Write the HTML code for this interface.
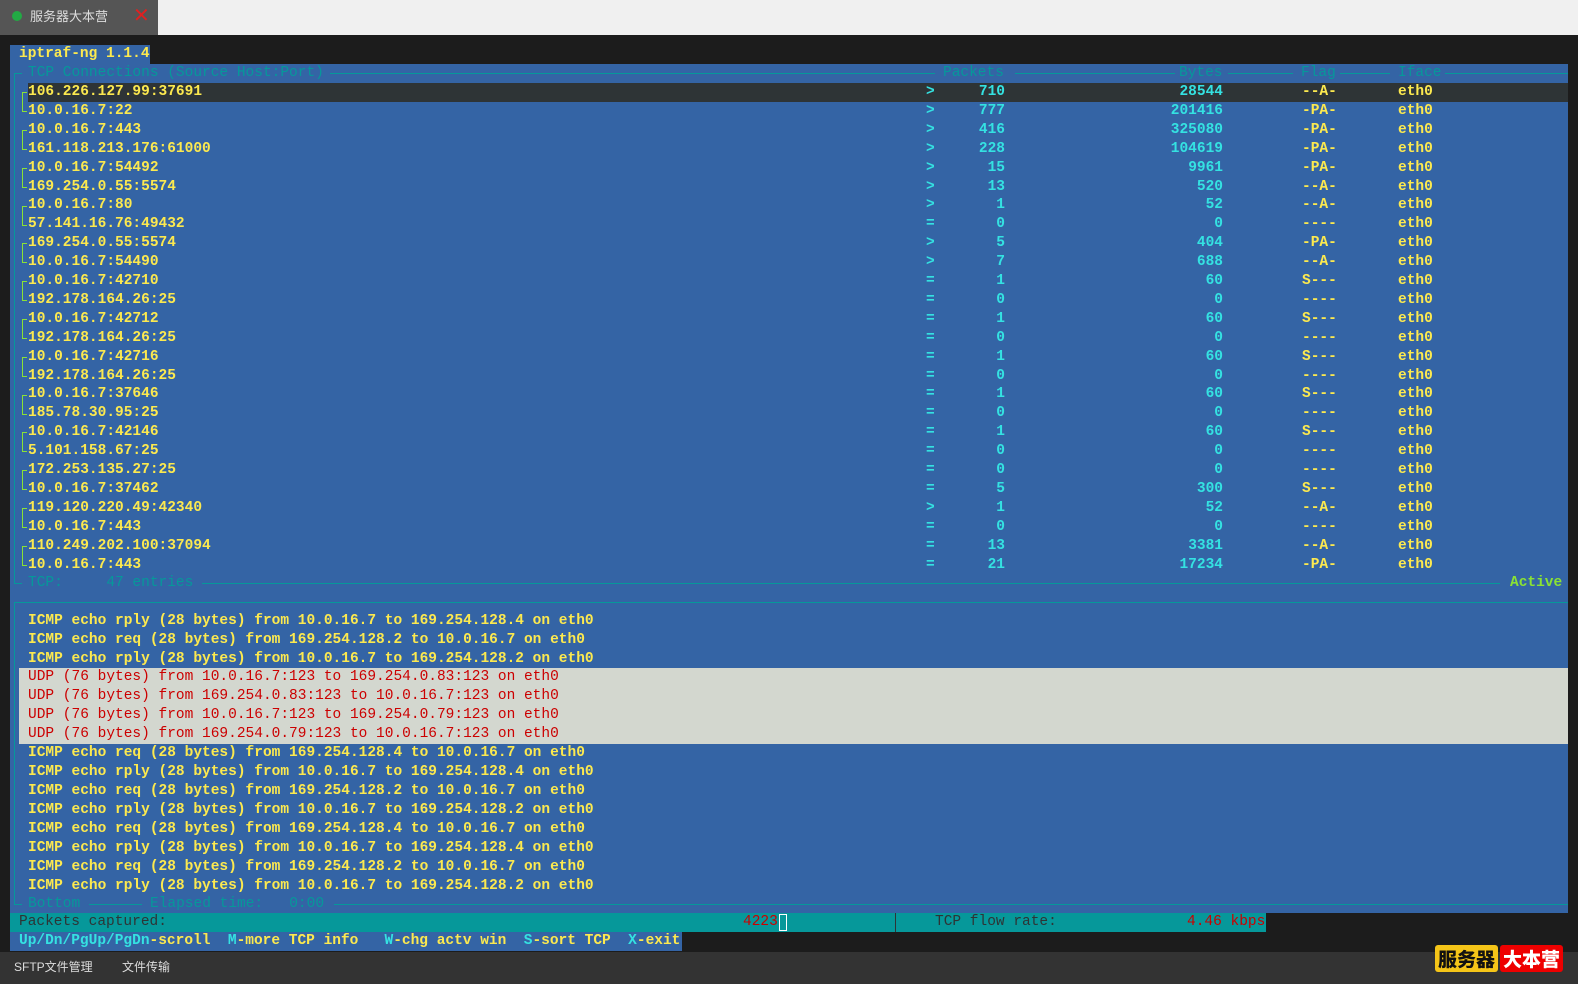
<!DOCTYPE html>
<html><head><meta charset="utf-8"><style>
*{margin:0;padding:0;box-sizing:border-box}
body{width:1578px;height:984px;background:#1c1c1c;position:relative;overflow:hidden;font-family:"Liberation Mono",monospace;font-size:14.5px;font-weight:bold}
.top{position:absolute;left:0;top:0;width:1578px;height:35px;background:#f0f0f0}
.tab{position:absolute;left:0;top:0;width:158px;height:35px;background:#555;font-family:"Liberation Sans","Noto Sans CJK SC",sans-serif;font-weight:normal;font-size:13px;color:#ddd}
.blue{position:absolute;background:#3464a5}
.r{position:absolute;left:0;width:1578px;height:19px;line-height:19px;white-space:pre}
.r span{position:absolute}
.h{left:28px;color:#fce94f}
.d{left:926px;color:#34e2e2}
.p{right:573px;color:#34e2e2}
.b{right:355px;color:#34e2e2}
.f{left:1302px;color:#fce94f}
.i{left:1398px;color:#fce94f}
.t{color:#06989a;font-weight:normal}
.line{position:absolute;height:1px;background:#06989a}
.br{position:absolute;left:22px;width:5px;border:1px solid #8ae234;border-right:none;height:20px}
.m{left:28px;color:#fce94f}
.u{position:absolute;left:19px;width:1549px;height:19px;background:#d3d7cf}
.uc{left:28px;color:#cc0000;font-weight:normal}
</style></head><body>
<div class="top"></div>
<div class="tab"><div style="position:absolute;left:12px;top:11px;width:10px;height:10px;border-radius:5px;background:#22aa44"></div><div style="position:absolute;left:30px;top:6px">服务器大本营</div><div style="position:absolute;left:133px;top:3px;color:#e02020;font-size:20px">✕</div></div>

<div class="blue" style="left:10px;top:45px;width:140px;height:19px"></div>
<div class="blue" style="left:10px;top:64px;width:1558px;height:849px"></div>
<div class="blue" style="left:10px;top:932px;width:672px;height:19px"></div>
<div style="position:absolute;left:28px;top:83px;width:1540px;height:19px;background:#2e3436"></div>

<div class="r" style="top:45px"><span style="left:19px;color:#fce94f">iptraf-ng 1.1.4</span></div>
<div class="line" style="left:14px;top:73px;width:8px"></div>
<div class="line" style="left:330px;top:73px;width:605px"></div>
<div class="line" style="left:1015px;top:73px;width:160px"></div>
<div class="line" style="left:1228px;top:73px;width:65px"></div>
<div class="line" style="left:1340px;top:73px;width:50px"></div>
<div class="line" style="left:1445px;top:73px;width:123px"></div>
<div class="line" style="left:14px;top:73px;width:1px;height:510px"></div>
<div class="r" style="top:64px"><span class="t" style="left:28px">TCP Connections (Source Host:Port)</span><span class="t" style="left:943px">Packets</span><span class="t" style="left:1179px">Bytes</span><span class="t" style="left:1301px">Flag</span><span class="t" style="left:1398px">Iface</span></div>

<div class="br" style="top:92px"></div><div class="br" style="top:130px"></div><div class="br" style="top:168px"></div><div class="br" style="top:206px"></div><div class="br" style="top:243px"></div><div class="br" style="top:281px"></div><div class="br" style="top:319px"></div><div class="br" style="top:357px"></div><div class="br" style="top:395px"></div><div class="br" style="top:432px"></div><div class="br" style="top:470px"></div><div class="br" style="top:508px"></div><div class="br" style="top:546px"></div>

<div class="r" style="top:83px"><span class="h">106.226.127.99:37691</span><span class="d">&gt;</span><span class="p">710</span><span class="b">28544</span><span class="f">--A-</span><span class="i">eth0</span></div>
<div class="r" style="top:101.9px"><span class="h">10.0.16.7:22</span><span class="d">&gt;</span><span class="p">777</span><span class="b">201416</span><span class="f">-PA-</span><span class="i">eth0</span></div>
<div class="r" style="top:120.8px"><span class="h">10.0.16.7:443</span><span class="d">&gt;</span><span class="p">416</span><span class="b">325080</span><span class="f">-PA-</span><span class="i">eth0</span></div>
<div class="r" style="top:139.7px"><span class="h">161.118.213.176:61000</span><span class="d">&gt;</span><span class="p">228</span><span class="b">104619</span><span class="f">-PA-</span><span class="i">eth0</span></div>
<div class="r" style="top:158.6px"><span class="h">10.0.16.7:54492</span><span class="d">&gt;</span><span class="p">15</span><span class="b">9961</span><span class="f">-PA-</span><span class="i">eth0</span></div>
<div class="r" style="top:177.5px"><span class="h">169.254.0.55:5574</span><span class="d">&gt;</span><span class="p">13</span><span class="b">520</span><span class="f">--A-</span><span class="i">eth0</span></div>
<div class="r" style="top:196.4px"><span class="h">10.0.16.7:80</span><span class="d">&gt;</span><span class="p">1</span><span class="b">52</span><span class="f">--A-</span><span class="i">eth0</span></div>
<div class="r" style="top:215.3px"><span class="h">57.141.16.76:49432</span><span class="d">=</span><span class="p">0</span><span class="b">0</span><span class="f">----</span><span class="i">eth0</span></div>
<div class="r" style="top:234.2px"><span class="h">169.254.0.55:5574</span><span class="d">&gt;</span><span class="p">5</span><span class="b">404</span><span class="f">-PA-</span><span class="i">eth0</span></div>
<div class="r" style="top:253.1px"><span class="h">10.0.16.7:54490</span><span class="d">&gt;</span><span class="p">7</span><span class="b">688</span><span class="f">--A-</span><span class="i">eth0</span></div>
<div class="r" style="top:272px"><span class="h">10.0.16.7:42710</span><span class="d">=</span><span class="p">1</span><span class="b">60</span><span class="f">S---</span><span class="i">eth0</span></div>
<div class="r" style="top:290.9px"><span class="h">192.178.164.26:25</span><span class="d">=</span><span class="p">0</span><span class="b">0</span><span class="f">----</span><span class="i">eth0</span></div>
<div class="r" style="top:309.8px"><span class="h">10.0.16.7:42712</span><span class="d">=</span><span class="p">1</span><span class="b">60</span><span class="f">S---</span><span class="i">eth0</span></div>
<div class="r" style="top:328.7px"><span class="h">192.178.164.26:25</span><span class="d">=</span><span class="p">0</span><span class="b">0</span><span class="f">----</span><span class="i">eth0</span></div>
<div class="r" style="top:347.6px"><span class="h">10.0.16.7:42716</span><span class="d">=</span><span class="p">1</span><span class="b">60</span><span class="f">S---</span><span class="i">eth0</span></div>
<div class="r" style="top:366.5px"><span class="h">192.178.164.26:25</span><span class="d">=</span><span class="p">0</span><span class="b">0</span><span class="f">----</span><span class="i">eth0</span></div>
<div class="r" style="top:385.4px"><span class="h">10.0.16.7:37646</span><span class="d">=</span><span class="p">1</span><span class="b">60</span><span class="f">S---</span><span class="i">eth0</span></div>
<div class="r" style="top:404.3px"><span class="h">185.78.30.95:25</span><span class="d">=</span><span class="p">0</span><span class="b">0</span><span class="f">----</span><span class="i">eth0</span></div>
<div class="r" style="top:423.2px"><span class="h">10.0.16.7:42146</span><span class="d">=</span><span class="p">1</span><span class="b">60</span><span class="f">S---</span><span class="i">eth0</span></div>
<div class="r" style="top:442.1px"><span class="h">5.101.158.67:25</span><span class="d">=</span><span class="p">0</span><span class="b">0</span><span class="f">----</span><span class="i">eth0</span></div>
<div class="r" style="top:461px"><span class="h">172.253.135.27:25</span><span class="d">=</span><span class="p">0</span><span class="b">0</span><span class="f">----</span><span class="i">eth0</span></div>
<div class="r" style="top:479.9px"><span class="h">10.0.16.7:37462</span><span class="d">=</span><span class="p">5</span><span class="b">300</span><span class="f">S---</span><span class="i">eth0</span></div>
<div class="r" style="top:498.8px"><span class="h">119.120.220.49:42340</span><span class="d">&gt;</span><span class="p">1</span><span class="b">52</span><span class="f">--A-</span><span class="i">eth0</span></div>
<div class="r" style="top:517.7px"><span class="h">10.0.16.7:443</span><span class="d">=</span><span class="p">0</span><span class="b">0</span><span class="f">----</span><span class="i">eth0</span></div>
<div class="r" style="top:536.6px"><span class="h">110.249.202.100:37094</span><span class="d">=</span><span class="p">13</span><span class="b">3381</span><span class="f">--A-</span><span class="i">eth0</span></div>
<div class="r" style="top:555.5px"><span class="h">10.0.16.7:443</span><span class="d">=</span><span class="p">21</span><span class="b">17234</span><span class="f">-PA-</span><span class="i">eth0</span></div>

<div class="line" style="left:14px;top:583px;width:8px"></div>
<div class="line" style="left:202px;top:583px;width:1298px"></div>
<div class="r" style="top:574px"><span class="t" style="left:28px">TCP:     47 entries</span><span style="left:1510px;color:#8ae234">Active</span></div>

<div class="line" style="left:14px;top:602px;width:1554px"></div>
<div class="line" style="left:14px;top:602px;width:1px;height:302px"></div>
<div class="u" style="top:668px;height:76px"></div>
<div class="r" style="top:612px"><span class="m">ICMP echo rply (28 bytes) from 10.0.16.7 to 169.254.128.4 on eth0</span></div>
<div class="r" style="top:631px"><span class="m">ICMP echo req (28 bytes) from 169.254.128.2 to 10.0.16.7 on eth0</span></div>
<div class="r" style="top:650px"><span class="m">ICMP echo rply (28 bytes) from 10.0.16.7 to 169.254.128.2 on eth0</span></div>
<div class="r" style="top:668px"><span class="uc">UDP (76 bytes) from 10.0.16.7:123 to 169.254.0.83:123 on eth0</span></div>
<div class="r" style="top:687px"><span class="uc">UDP (76 bytes) from 169.254.0.83:123 to 10.0.16.7:123 on eth0</span></div>
<div class="r" style="top:706px"><span class="uc">UDP (76 bytes) from 10.0.16.7:123 to 169.254.0.79:123 on eth0</span></div>
<div class="r" style="top:725px"><span class="uc">UDP (76 bytes) from 169.254.0.79:123 to 10.0.16.7:123 on eth0</span></div>
<div class="r" style="top:744px"><span class="m">ICMP echo req (28 bytes) from 169.254.128.4 to 10.0.16.7 on eth0</span></div>
<div class="r" style="top:763px"><span class="m">ICMP echo rply (28 bytes) from 10.0.16.7 to 169.254.128.4 on eth0</span></div>
<div class="r" style="top:782px"><span class="m">ICMP echo req (28 bytes) from 169.254.128.2 to 10.0.16.7 on eth0</span></div>
<div class="r" style="top:801px"><span class="m">ICMP echo rply (28 bytes) from 10.0.16.7 to 169.254.128.2 on eth0</span></div>
<div class="r" style="top:820px"><span class="m">ICMP echo req (28 bytes) from 169.254.128.4 to 10.0.16.7 on eth0</span></div>
<div class="r" style="top:839px"><span class="m">ICMP echo rply (28 bytes) from 10.0.16.7 to 169.254.128.4 on eth0</span></div>
<div class="r" style="top:858px"><span class="m">ICMP echo req (28 bytes) from 169.254.128.2 to 10.0.16.7 on eth0</span></div>
<div class="r" style="top:877px"><span class="m">ICMP echo rply (28 bytes) from 10.0.16.7 to 169.254.128.2 on eth0</span></div>

<div class="line" style="left:14px;top:904px;width:8px"></div>
<div class="line" style="left:89px;top:904px;width:53px"></div>
<div class="line" style="left:334px;top:904px;width:1234px"></div>
<div class="r" style="top:895px"><span class="t" style="left:28px">Bottom</span><span class="t" style="left:150px">Elapsed time:   0:00</span></div>

<div style="position:absolute;left:10px;top:913px;width:1256px;height:19px;background:#06989a"></div>
<div style="position:absolute;left:895px;top:913px;width:1px;height:19px;background:#2e3436"></div>
<div class="r" style="top:913px;font-weight:normal"><span style="left:19px;color:#2e3436">Packets captured:</span><span style="left:743px;color:#cc0000">4223</span><span style="left:779px;top:1px;width:8px;height:17px;border:1px solid #fff"></span><span style="left:935px;color:#2e3436">TCP flow rate:</span><span style="left:1187px;color:#cc0000">4.46 kbps</span></div>
<div class="r" style="top:932px"><span style="left:19px;color:#34e2e2">Up/Dn/PgUp/PgDn<b style="color:#fce94f">-scroll</b>  M<b style="color:#fce94f">-more TCP info</b>   W<b style="color:#fce94f">-chg actv win</b>  S<b style="color:#fce94f">-sort TCP</b>  X<b style="color:#fce94f">-exit</b></span></div>

<div style="position:absolute;left:0;top:952px;width:1578px;height:32px;background:#333;font-family:'Liberation Sans','Noto Sans CJK SC',sans-serif;font-weight:normal;font-size:12px;color:#ddd"><span style="position:absolute;left:14px;top:6px">SFTP文件管理</span><span style="position:absolute;left:122px;top:6px">文件传输</span></div>
<div style="position:absolute;left:1435px;top:945px;width:63px;height:27px;background:#f5c518;border-radius:3px;font-family:'Noto Sans CJK SC',sans-serif;font-size:19px;font-weight:900;color:#111;text-align:center;line-height:27px">服务器</div>
<div style="position:absolute;left:1500px;top:945px;width:63px;height:27px;background:#ee0000;border-radius:3px;font-family:'Noto Sans CJK SC',sans-serif;font-size:19px;font-weight:900;color:#fff;text-align:center;line-height:27px">大本营</div>
</body></html>
